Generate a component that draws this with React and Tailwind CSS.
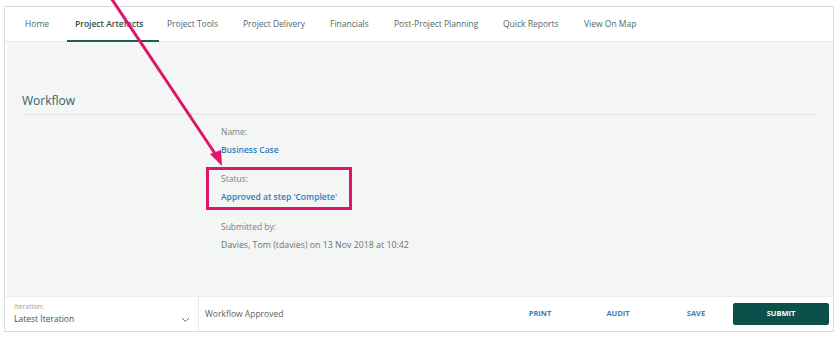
import React from 'react';

const tabs = [
  { label: 'Home', w: 'w-[50px]' },
  { label: 'Project Artefacts', w: 'w-[92px]', active: true },
  { label: 'Project Tools', w: 'w-[76px]' },
  { label: 'Project Delivery', w: 'w-[87px]' },
  { label: 'Financials', w: 'w-[64px]' },
  { label: 'Post-Project Planning', w: 'w-[109px]' },
  { label: 'Quick Reports', w: 'w-[81px]' },
  { label: 'View On Map', w: 'w-[80px]' },
];

function Field({ label, value, strong }) {
  return (
    <div className="flex flex-col">
      <div className="text-[8.5px] leading-[12px] text-[#7a7f80]">{label}</div>
      <div
        className={
          strong
            ? 'mt-[6px] text-[8.5px] leading-[12px] font-semibold text-[#2f7cc0]'
            : 'mt-[6px] text-[8.8px] leading-[12px] text-[#6d7273]'
        }
      >
        {value}
      </div>
    </div>
  );
}

export default function App() {
  return (
    <div className="relative w-[838px] h-[337px] bg-white overflow-hidden font-['Open_Sans','Noto_Sans',sans-serif]">
      <div className="ml-[4px] mt-[6px] w-[830px] h-[326px] border border-[#d9dcdc] flex flex-col">
        {/* tabs */}
        <nav className="h-[35px] flex pl-[12px] bg-white border-b border-[#e4e6e6]">
          {tabs.map((t) => (
            <div key={t.label} className={`${t.w} relative flex items-center`}>
              <span
                className={
                  t.active
                    ? 'pl-[8px] text-[8.5px] font-semibold text-[#2e4c4a] whitespace-nowrap'
                    : 'pl-[8px] text-[8.5px] text-[#4d6b69] whitespace-nowrap'
                }
              >
                {t.label}
              </span>
              {t.active && (
                <div className="absolute left-0 right-0 bottom-[-1px] h-[2px] bg-[#1f5c57]" />
              )}
            </div>
          ))}
        </nav>

        {/* body */}
        <div className="flex-1 bg-[#f4f5f5] ml-[2px] px-[15px] pt-[50px]">
          <h2 className="text-[12px] leading-[18px] text-[#336260]">Workflow</h2>
          <div className="mt-[4px] h-px bg-[#e3e5e5]" />
          <div className="ml-[199px] mt-[11px] flex flex-col gap-[17px]">
            <Field label="Name:" value="Business Case" strong />
            <Field label="Status:" value="Approved at step 'Complete'" strong />
            <div className="mt-[1px]">
              <Field label="Submitted by:" value="Davies, Tom (tdavies) on 13 Nov 2018 at 10:42" />
            </div>
          </div>
        </div>

        {/* footer */}
        <div className="h-[35px] flex items-stretch bg-white border-t border-[#eceeee]">
          <div className="w-[194px] border-r border-[#e6e8e8] pl-[9px] pr-[8px] flex flex-col justify-center">
            <div className="text-[7px] leading-[10px] text-[#9ea3a4]">Iteration:</div>
            <div className="flex items-center justify-between">
              <span className="text-[8.5px] leading-[14px] text-[#4a4f50]">Latest Iteration</span>
              <svg width="9" height="6" viewBox="0 0 9 6" className="mt-[1px]">
                <path d="M1 1l3.5 3.5L8 1" fill="none" stroke="#6a6f70" strokeWidth="1" />
              </svg>
            </div>
          </div>
          <div className="flex-1 flex items-center pl-[6px] pr-[4px]">
            <span className="text-[8.5px] text-[#5d6263]">Workflow Approved</span>
            <div className="ml-auto flex items-center">
              <button className="w-[78px] text-center text-[7.5px] font-bold text-[#3b7ebf]">PRINT</button>
              <button className="w-[78px] text-center text-[7.5px] font-bold text-[#3b7ebf]">AUDIT</button>
              <button className="w-[78px] text-center text-[7.5px] font-bold text-[#3b7ebf]">SAVE</button>
              <button className="ml-[-2px] w-[96px] h-[22px] rounded-[2px] bg-[#0c4f4b] text-white text-[7.5px] font-bold">
                SUBMIT
              </button>
            </div>
          </div>
        </div>
      </div>

      {/* annotation */}
      <svg className="absolute left-0 top-0 pointer-events-none" width="838" height="337">
        <line x1="111" y1="-2" x2="216" y2="155" stroke="#e0146c" strokeWidth="3" />
        <polygon points="222,166 210,154 221,150" fill="#e0146c" />
      </svg>
      <div className="absolute left-[206px] top-[167px] w-[146px] h-[43px] border-[3px] border-[#e0146c]" />
    </div>
  );
}
